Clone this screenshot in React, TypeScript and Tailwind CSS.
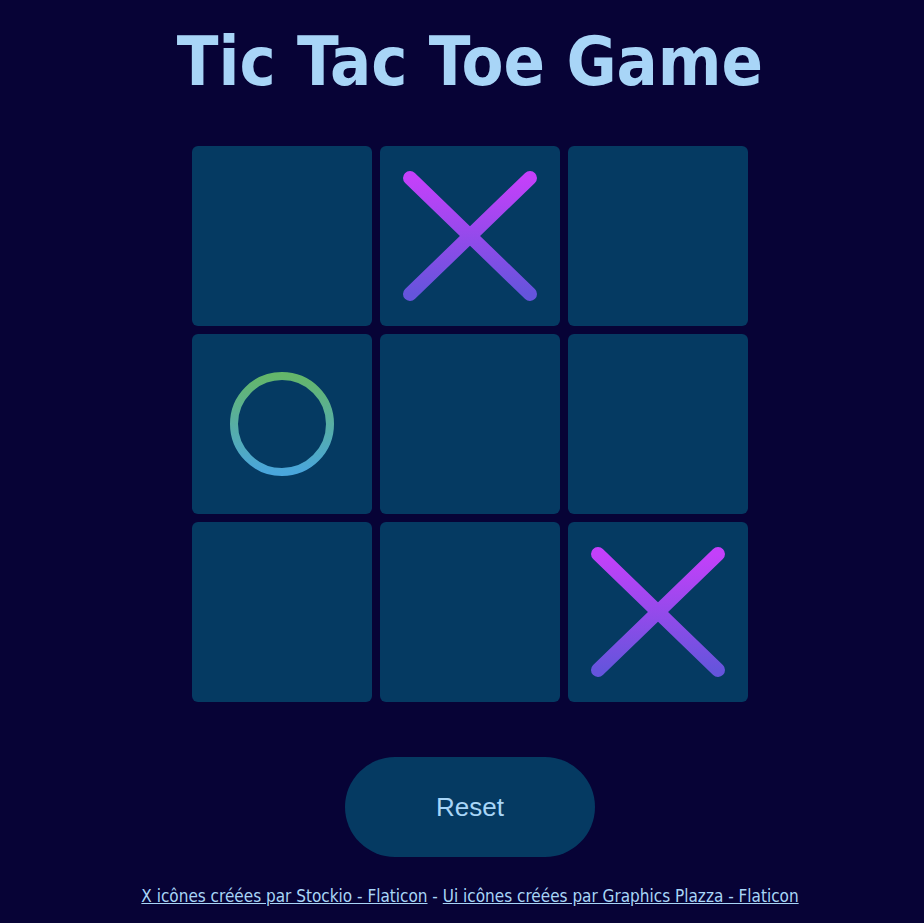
import React, { useState } from 'react'

type Mark = 'X' | 'O' | null

const XIcon = () => (
  <svg width="140" height="130" viewBox="0 0 140 130">
    <defs>
      <linearGradient id="xg" x1="0" y1="0" x2="0" y2="1">
        <stop offset="0" stopColor="#c440fa" />
        <stop offset="1" stopColor="#6554dc" />
      </linearGradient>
    </defs>
    <g stroke="url(#xg)" strokeWidth="14" strokeLinecap="round">
      <line x1="10" y1="7" x2="130" y2="123" />
      <line x1="130" y1="7" x2="10" y2="123" />
    </g>
  </svg>
)

const OIcon = () => (
  <svg width="110" height="110" viewBox="0 0 110 110">
    <defs>
      <linearGradient id="og" x1="0" y1="0" x2="0" y2="1">
        <stop offset="0" stopColor="#64b66a" />
        <stop offset="1" stopColor="#4aa6dc" />
      </linearGradient>
    </defs>
    <circle cx="55" cy="55" r="48" fill="none" stroke="url(#og)" strokeWidth="8" />
  </svg>
)

const start: Mark[] = [null, 'X', null, 'O', null, null, null, null, 'X']

const font = { fontFamily: '"DejaVu Sans Condensed", "DejaVu Sans", sans-serif' }

export default function App() {
  const [board, setBoard] = useState<Mark[]>(start)

  return (
    <div className="min-h-screen bg-[#070336] flex flex-col items-center pl-[16px]">
      <h1 className="mt-[22px] text-[68px] leading-[80px] font-bold text-[#a8d5f7]" style={font}>
        Tic Tac Toe Game
      </h1>
      <div className="mt-[44px] grid grid-cols-[repeat(3,180px)] gap-2">
        {board.map((cell, i) => (
          <div
            key={i}
            className="w-[180px] h-[180px] rounded-md bg-[#053a62] flex items-center justify-center"
          >
            {cell === 'X' && <XIcon />}
            {cell === 'O' && <OIcon />}
          </div>
        ))}
      </div>
      <button
        onClick={() => setBoard(Array(9).fill(null))}
        className="mt-[55px] w-[250px] h-[100px] rounded-full bg-[#053a62] text-[26px] text-[#a8d5f7]"
        style={{ fontFamily: '"Liberation Sans", Arial, sans-serif' }}
      >
        Reset
      </button>
      <p className="mt-[27px] text-[17px] text-[#a8d5f7]" style={font}>
        <a href="#" className="underline">X icônes créées par Stockio - Flaticon</a>
        {' - '}
        <a href="#" className="underline">Ui icônes créées par Graphics Plazza - Flaticon</a>
      </p>
    </div>
  )
}
